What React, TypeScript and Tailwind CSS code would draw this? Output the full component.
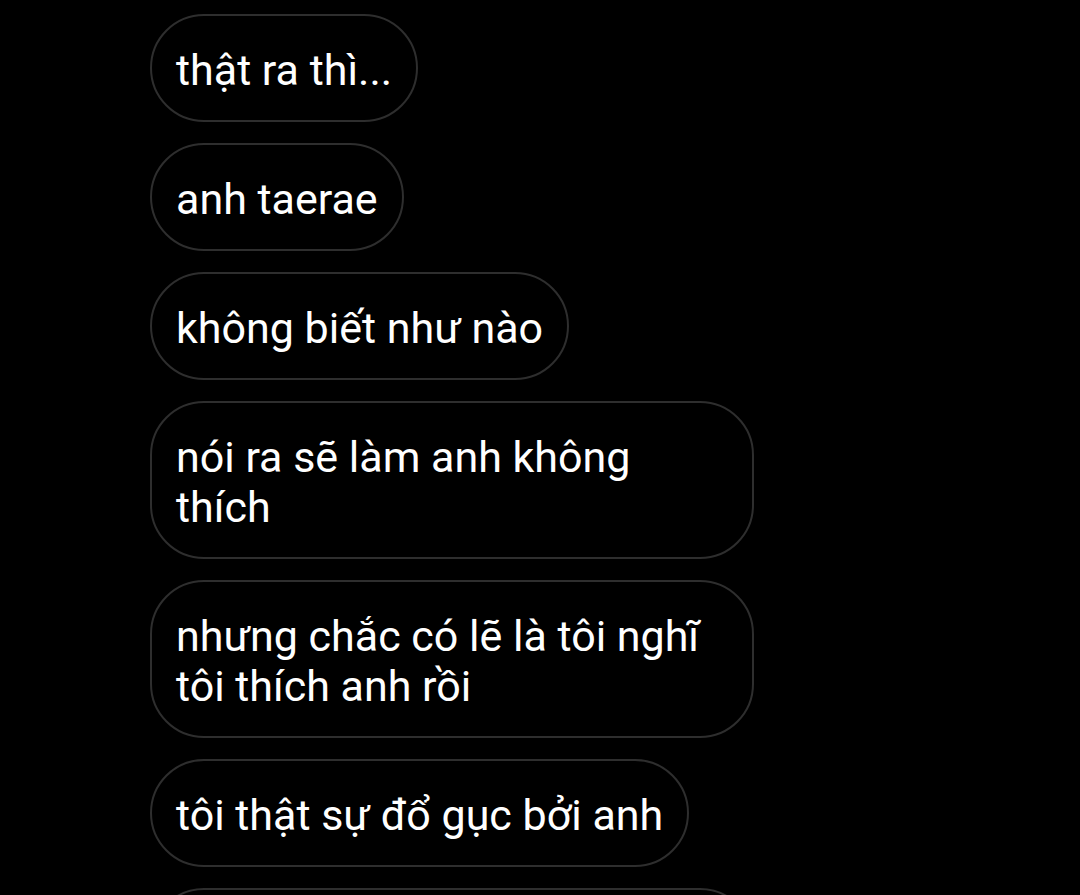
import React from 'react';

const messages = [
  'thật ra thì...',
  'anh taerae',
  'không biết như nào',
  'nói ra sẽ làm anh không thích',
  'nhưng chắc có lẽ là tôi nghĩ tôi thích anh rồi',
  'tôi thật sự đổ gục bởi anh',
  'nhưng mà tôi không dám nói ra với anh',
];

function Bubble({ text }: { text: string }) {
  return (
    <div className="max-w-[604px] self-start rounded-[54px] border-2 border-[#2e2e2e] px-6 pt-[29px] pb-[25px] text-[43px] leading-[50px] text-white">
      {text}
    </div>
  );
}

export default function App() {
  return (
    <div
      className="h-[895px] w-[1080px] overflow-hidden bg-black"
      style={{ fontFamily: 'Roboto, "Noto Sans", sans-serif' }}
    >
      <div className="flex flex-col gap-[21px] pl-[150px] pt-[14px]">
        {messages.map((m, i) => (
          <Bubble key={i} text={m} />
        ))}
      </div>
    </div>
  );
}
